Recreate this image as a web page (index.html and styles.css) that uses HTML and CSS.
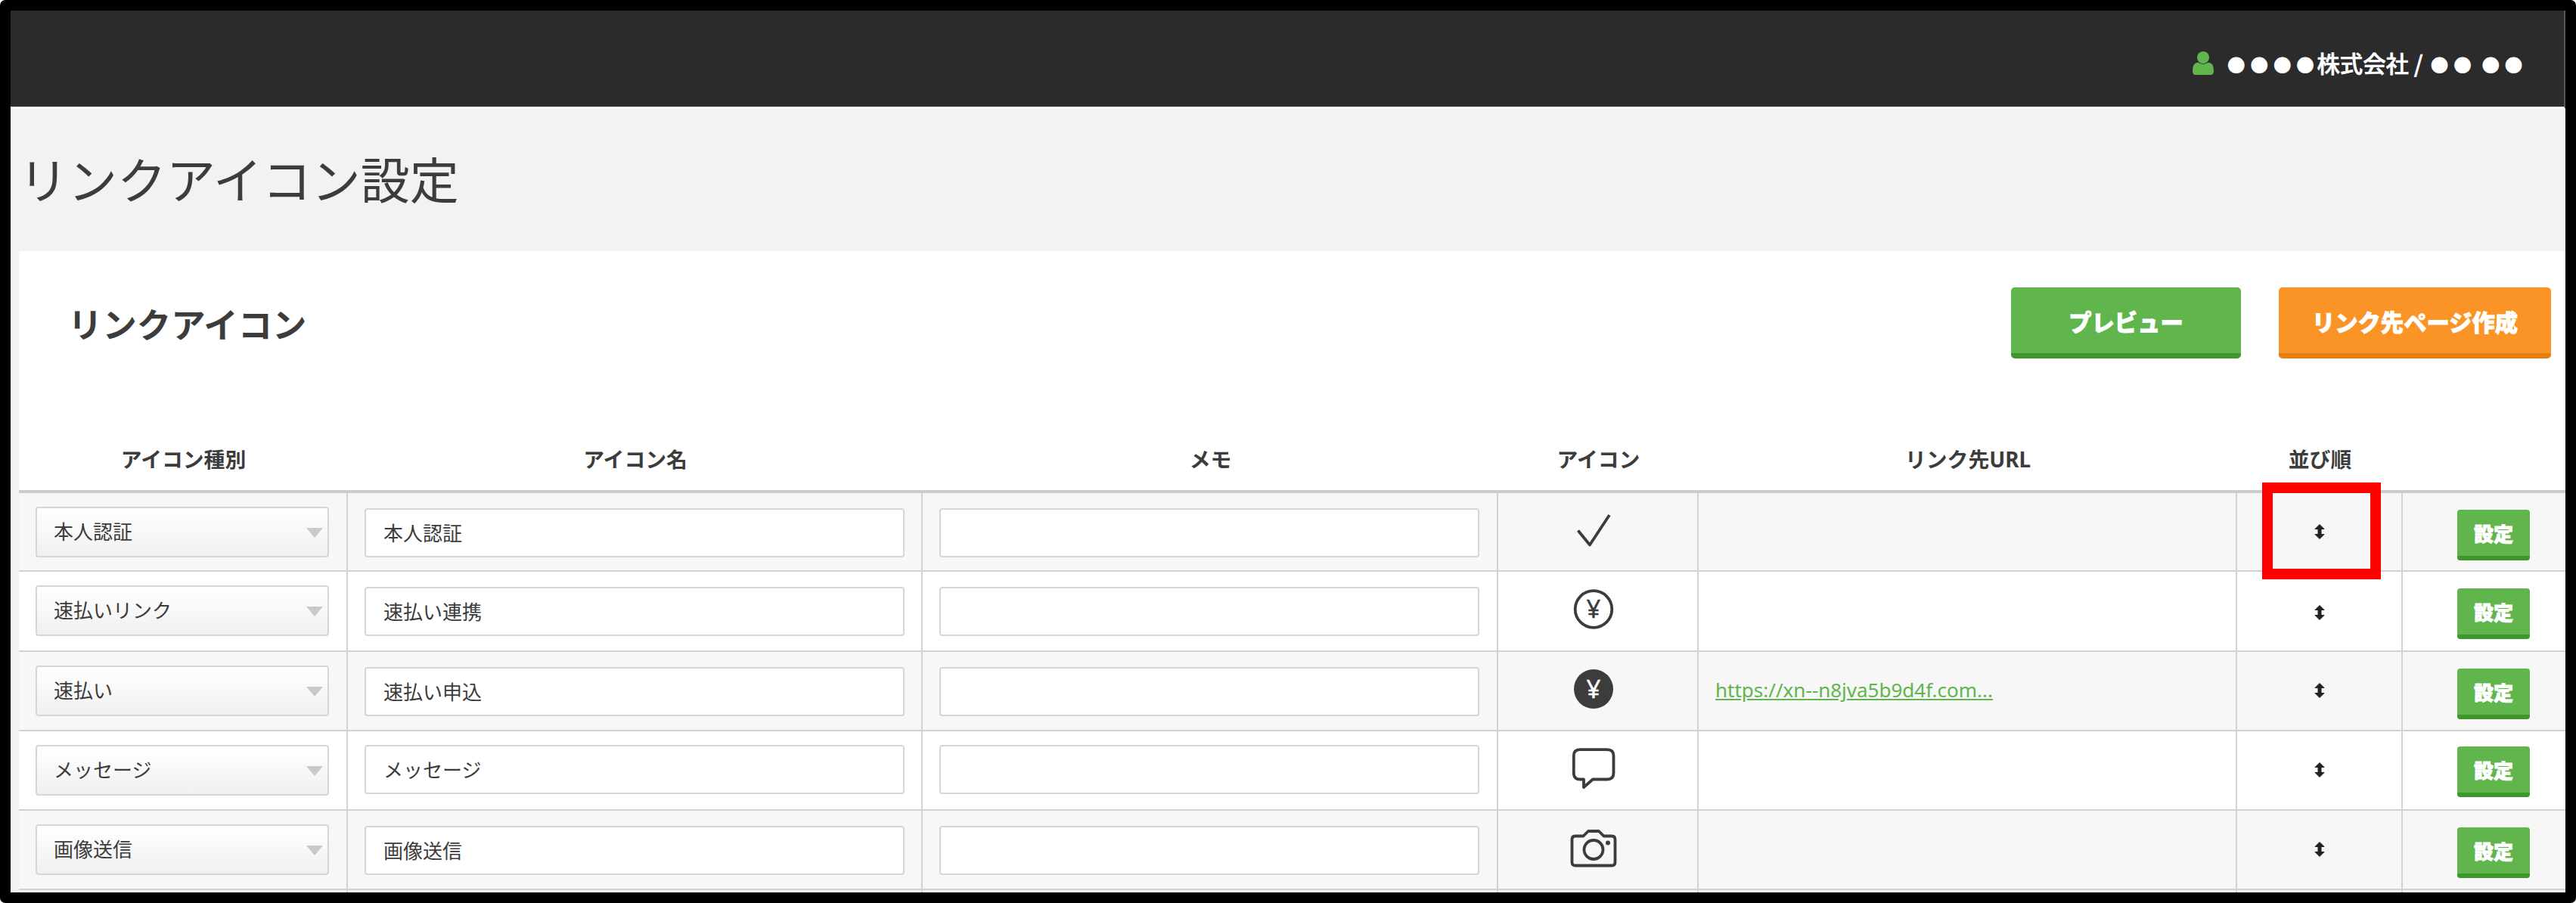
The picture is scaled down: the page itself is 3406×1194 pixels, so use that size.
FILE: index.html
```
<!DOCTYPE html>
<html lang="ja">
<head>
  <meta charset="UTF-8" />
  <title>リンクアイコン設定</title>
  <link rel="stylesheet" href="styles.css">
</head>
<body>
  <div class="frame">
    <header class="topbar">
      <svg class="user-icon" viewBox="0 0 28 31"><circle cx="14" cy="8" r="8"/><path d="M7 14.500 Q14 19 21 14.500 Q28 15 28 26 Q28 31 24 31 H4 Q0 31 0 26 Q0 15 7 14.500Z"/></svg>
      <span class="user-name"><span class="dots">●●●●</span>株式会社 / <span class="dots">●●</span> <span class="dots">●●</span></span>
    </header>
    <h1 class="page-title">リンクアイコン設定</h1>

    <main class="panel">
      <div class="panel-head">
        <h2>リンクアイコン</h2>
        <button class="btn btn-green">プレビュー</button>
        <button class="btn btn-orange">リンク先ページ作成</button>
      </div>

      <table class="icon-table">
        <colgroup>
          <col class="c-type"><col class="c-name"><col class="c-memo"><col class="c-icon"><col class="c-url"><col class="c-sort"><col class="c-set">
        </colgroup>
        <thead>
          <tr>
            <th>アイコン種別</th><th>アイコン名</th><th>メモ</th><th>アイコン</th><th>リンク先URL</th><th>並び順</th><th></th>
          </tr>
        </thead>
        <tbody>
          <tr>
            <td><div class="select">本人認証</div></td>
            <td><div class="input">本人認証</div></td>
            <td><div class="input"></div></td>
            <td><svg class="icon" viewBox="0 0 64 56"><path d="M11.500 26.500 L27 45.500 L53 6"/></svg></td>
            <td></td>
            <td class="sort"><svg class="sort-icon" viewBox="0 0 14 20"><path d="M7 .5 L13 6.500 H9 V13.500 H13 L7 19.500 L1 13.500 H5 V6.500 H1Z"/></svg><span class="marker"></span></td>
            <td><button class="btn-set">設定</button></td>
          </tr>
          <tr>
            <td><div class="select">速払いリンク</div></td>
            <td><div class="input">速払い連携</div></td>
            <td><div class="input"></div></td>
            <td><svg class="icon" viewBox="0 0 64 56"><circle cx="32" cy="26.500" r="24.300"/><text class="yen" x="32" y="38">¥</text></svg></td>
            <td></td>
            <td class="sort"><svg class="sort-icon" viewBox="0 0 14 20"><path d="M7 .5 L13 6.500 H9 V13.500 H13 L7 19.500 L1 13.500 H5 V6.500 H1Z"/></svg></td>
            <td><button class="btn-set">設定</button></td>
          </tr>
          <tr>
            <td><div class="select">速払い</div></td>
            <td><div class="input">速払い申込</div></td>
            <td><div class="input"></div></td>
            <td><svg class="icon" viewBox="0 0 64 56"><circle class="solid" cx="32" cy="26" r="26"/><text class="yen yen-white" x="32" y="38">¥</text></svg></td>
            <td><a class="link" href="#">https://xn--n8jva5b9d4f.com...</a></td>
            <td class="sort"><svg class="sort-icon" viewBox="0 0 14 20"><path d="M7 .5 L13 6.500 H9 V13.500 H13 L7 19.500 L1 13.500 H5 V6.500 H1Z"/></svg></td>
            <td><button class="btn-set">設定</button></td>
          </tr>
          <tr>
            <td><div class="select">メッセージ</div></td>
            <td><div class="input">メッセージ</div></td>
            <td><div class="input"></div></td>
            <td><svg class="icon icon-up" viewBox="0 0 64 56"><path d="M14 3.200 H50 Q58.500 3.200 58.500 11.500 V34 Q58.500 42.500 50 42.500 H31 L19 53 V42.500 H14 Q5.800 42.500 5.800 34 V11.500 Q5.800 3.200 14 3.200Z"/></svg></td>
            <td></td>
            <td class="sort"><svg class="sort-icon" viewBox="0 0 14 20"><path d="M7 .5 L13 6.500 H9 V13.500 H13 L7 19.500 L1 13.500 H5 V6.500 H1Z"/></svg></td>
            <td><button class="btn-set">設定</button></td>
          </tr>
          <tr>
            <td><div class="select">画像送信</div></td>
            <td><div class="input">画像送信</div></td>
            <td><div class="input"></div></td>
            <td><svg class="icon icon-up" viewBox="0 0 64 56"><path d="M8 12.500 H18.500 L25 6 H39 L45.500 12.500 H56 Q60.500 12.500 60.500 17 V47 Q60.500 51.500 56 51.500 H8 Q3.500 51.500 3.500 47 V17 Q3.500 12.500 8 12.500Z"/><circle cx="32" cy="30.500" r="12.500"/><circle class="solid" cx="51" cy="21.500" r="3"/></svg></td>
            <td></td>
            <td class="sort"><svg class="sort-icon" viewBox="0 0 14 20"><path d="M7 .5 L13 6.500 H9 V13.500 H13 L7 19.500 L1 13.500 H5 V6.500 H1Z"/></svg></td>
            <td><button class="btn-set">設定</button></td>
          </tr>
          <tr class="last"><td></td><td></td><td></td><td></td><td></td><td></td><td></td></tr>
        </tbody>
      </table>
    </main>
  </div>
</body>
</html>
```
FILE: styles.css
```
* {
  box-sizing: border-box;
}

body {
  margin: 0;
  background: #fff;
  color: #3c3c3c;
  font-family: "Noto Sans", "Noto Sans CJK JP", sans-serif;
}

.frame {
  height: 1194px;
  border: 14px solid #000;
  border-radius: 7px;
  background: #f2f2f2;
  overflow: hidden;
}

.topbar {
  display: flex;
  align-items: center;
  justify-content: flex-end;
  height: 130px;
  padding: 0 51px 0 0;
  background: #2b2b2b;
  border-right: 2px solid #555;
  border-bottom: 3px solid #fff;
  color: #fff;
}

.user-icon {
  width: 28px;
  height: 31px;
  margin: 12px 15px 0 0;
  fill: #60b54c;
}

.user-name {
  margin-top: 12px;
  font-family: "Noto Sans CJK JP", sans-serif;
  font-size: 30.4px;
  font-weight: 500;
  line-height: 40px;
  white-space: nowrap;
  -webkit-text-stroke: 0.6px #fff;
}

.dots {
  margin: 0 -3px 0 3px;
  font-size: 24px;
  letter-spacing: 6.4px;
  vertical-align: 1px;
  -webkit-text-stroke: 0;
}

.page-title {
  margin: 0;
  height: 188px;
  padding-left: 11px;
  font-size: 65px;
  font-weight: 400;
  line-height: 188px;
}

.panel {
  height: 848px;
  margin-left: 11px;
  background: #fff;
  overflow: hidden;
}

.panel-head {
  display: flex;
  align-items: flex-start;
  height: 233px;
  padding: 48px 19px 0 65px;
}

.panel-head h2 {
  flex: 1;
  margin: 0;
  font-size: 45.4px;
  font-weight: 700;
  line-height: 98px;
}

.btn {
  height: 94px;
  padding: 3px 0 0;
  border: 0;
  border-bottom: 7px solid;
  border-radius: 5px;
  color: #fff;
  font-family: "Noto Sans CJK JP", sans-serif;
  font-size: 30.3px;
  font-weight: 900;
  -webkit-text-stroke: 0.8px #fff;
}

.btn-green {
  width: 304px;
  margin-right: 50px;
  background: #60b54c;
  border-color: #3f962b;
}

.btn-orange {
  width: 360px;
  background: #fb9426;
  border-color: #e67e10;
}

/* table */
.icon-table {
  width: 3367px;
  table-layout: fixed;
  border-collapse: separate;
  border-spacing: 0;
  font-size: 26px;
}

.c-type { width: 435px; }
.c-name { width: 760px; }
.c-memo { width: 761px; }
.c-icon { width: 265px; }
.c-url { width: 712px; }
.c-sort { width: 219px; }
.c-set { width: 215px; }

.icon-table th {
  height: 87px;
  padding: 0;
  border-bottom: 4px solid #ccc;
  font-size: 27.8px;
  font-weight: 700;
  line-height: 40px;
}

.icon-table td {
  height: 105px;
  padding: 18px 22px 0;
  border-right: 2px solid #d2d2d2;
  border-bottom: 2px solid #d2d2d2;
  vertical-align: top;
}

.icon-table tbody tr:first-child td {
  height: 104px;
}

.icon-table tbody tr:nth-child(2) td {
  height: 106px;
}

.icon-table td:last-child {
  border-right: 0;
}

.icon-table tbody tr:nth-child(odd) td {
  background: #f7f7f7;
}

.icon-table .last td {
  height: 20px;
  padding: 0;
}

.icon-table tbody .last:nth-child(even) td {
  background: #fff;
}

.select {
  position: relative;
  width: 388px;
  height: 67px;
  padding-left: 22px;
  border: 2px solid #d6d6d6;
  border-radius: 4px;
  background: linear-gradient(#fff, #f0f0f0);
  line-height: 62px;
}

.select::after {
  content: "";
  position: absolute;
  right: 6px;
  top: 26px;
  border: 11px solid transparent;
  border-top: 13px solid #c9c9c9;
  border-bottom: 0;
}

.input {
  width: 714px;
  height: 65px;
  margin-top: 2px;
  padding-left: 23px;
  border: 2px solid #d6d6d6;
  border-radius: 4px;
  background: #fff;
  line-height: 62px;
}

.icon-table tr:nth-child(4) .input {
  margin-top: 0;
}

.icon {
  display: block;
  width: 64px;
  height: 56px;
  margin: 5px 0 0 72px;
  fill: none;
  stroke: #3c3c3c;
  stroke-width: 3.8;
  stroke-linejoin: round;
}

.icon-up {
  margin-top: 3px;
}

.icon .solid {
  fill: #3c3c3c;
  stroke: none;
}

.icon .yen {
  fill: #3c3c3c;
  stroke: #3c3c3c;
  stroke-width: 0.4;
  font-size: 33px;
  text-anchor: middle;
}

.icon .yen-white {
  fill: #fff;
  stroke: #fff;
}

.link {
  display: block;
  margin-top: 12px;
  color: #60b54c;
  line-height: 40px;
}

.icon-table td.sort {
  position: relative;
}

.sort-icon {
  display: block;
  width: 14px;
  height: 20px;
  margin: 23px auto 0;
  overflow: visible;
  fill: #222;
  stroke: #222;
  stroke-linejoin: round;
}

.icon-table tr:nth-child(2) .sort-icon {
  margin-top: 26px;
}

/* highlight around the first sort handle */
.marker {
  position: absolute;
  left: 33px;
  top: -14px;
  width: 157px;
  height: 128px;
  border: 14px solid #f00;
}

.btn-set {
  display: block;
  width: 96px;
  height: 67px;
  margin: 4px 0 0 50px;
  padding: 0;
  border: 0;
  border-bottom: 6px solid #3f962b;
  border-radius: 4px;
  background: #60b54c;
  color: #fff;
  font-family: "Noto Sans CJK JP", sans-serif;
  font-size: 26px;
  font-weight: 900;
  -webkit-text-stroke: 0.8px #fff;
}

.icon-table tr:nth-child(4) .btn-set {
  margin-top: 2px;
}
```
